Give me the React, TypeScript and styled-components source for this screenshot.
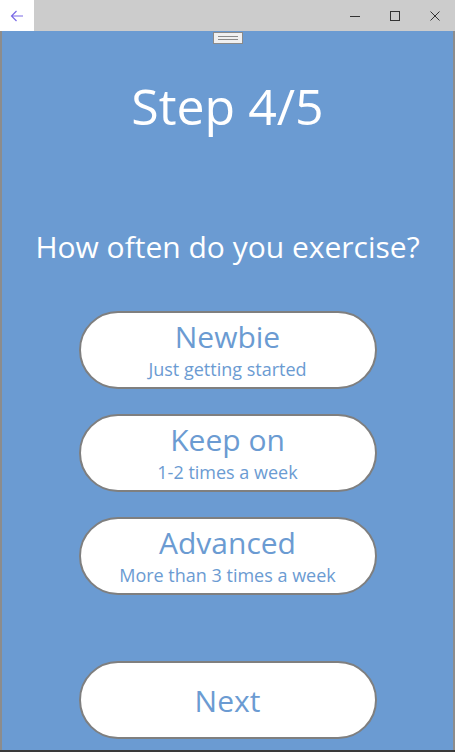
import React from "react";
import styled, { createGlobalStyle } from "styled-components";

const Global = createGlobalStyle`
  html, body { margin: 0; padding: 0; background: #ffffff; }
  body { font-family: "Open Sans", "Noto Sans", sans-serif; }
  * { box-sizing: border-box; }
`;

const Window = styled.div`
  width: 455px;
  height: 752px;
  display: flex;
  flex-direction: column;
  overflow: hidden;
  background: #3a3a3a;
`;

const TitleBar = styled.div`
  height: 31px;
  flex: 0 0 31px;
  display: flex;
  align-items: stretch;
  background: #cccccc;
`;

const BackButton = styled.div`
  width: 34px;
  background: #ffffff;
  display: flex;
  align-items: center;
  justify-content: center;
`;

const Spacer = styled.div`
  flex: 1;
`;

const CaptionButton = styled.div`
  width: 40px;
  display: flex;
  align-items: center;
  justify-content: center;
`;

const Content = styled.div`
  flex: 1;
  display: flex;
  flex-direction: column;
  align-items: center;
  background: #6b9bd2;
  border-left: 2px solid #8c8c8c;
  border-right: 2px solid #8c8c8c;
  margin-bottom: 2px;
`;

const Grip = styled.div`
  width: 30px;
  height: 12px;
  margin-top: 1px;
  background: #f0f0f0;
  border: 1px solid #8a8a8a;
  display: flex;
  flex-direction: column;
  justify-content: center;
  align-items: center;
  gap: 2px;
`;

const GripLine = styled.div`
  width: 20px;
  height: 1px;
  background: #8a8a8a;
`;

const Title = styled.h1`
  margin: 30px 0 0;
  font-weight: 400;
  font-size: 50px;
  line-height: 64px;
  color: #ffffff;
`;

const Question = styled.h2`
  margin: 89px 0 0;
  font-weight: 400;
  font-size: 30px;
  line-height: 40px;
  color: #ffffff;
`;

const Options = styled.div`
  margin-top: 44px;
  display: flex;
  flex-direction: column;
  gap: 25px;
`;

const Pill = styled.div`
  width: 298px;
  height: 78px;
  background: #ffffff;
  border: 2px solid #7f7f7f;
  border-radius: 39px;
  display: flex;
  flex-direction: column;
  align-items: center;
  color: #6b9bd2;
`;

const OptionPill = styled(Pill)`
  justify-content: flex-start;
  padding-top: 6px;
`;

const PillTitle = styled.div`
  font-size: 30px;
  line-height: 36px;
`;

const PillSub = styled.div`
  font-size: 18px;
  line-height: 28px;
`;

const NextPill = styled(Pill)`
  margin-top: 66px;
  justify-content: center;
`;

const NextLabel = styled.div`
  font-size: 30px;
  line-height: 36px;
  margin-top: 2px;
`;

const options = [
  { title: "Newbie", sub: "Just getting started" },
  { title: "Keep on", sub: "1-2 times a week" },
  { title: "Advanced", sub: "More than 3 times a week" },
];

export default function App() {
  return (
    <>
      <Global />
      <Window>
        <TitleBar>
          <BackButton>
            <svg width="14" height="12" viewBox="0 0 14 12">
              <path d="M13 6H1.5M6.5 1L1.5 6l5 5" fill="none" stroke="#7a6ae6" strokeWidth="1.2" />
            </svg>
          </BackButton>
          <Spacer />
          <CaptionButton>
            <svg width="10" height="10" viewBox="0 0 10 10">
              <path d="M0 5.5h10" stroke="#333" strokeWidth="1" />
            </svg>
          </CaptionButton>
          <CaptionButton>
            <svg width="10" height="10" viewBox="0 0 10 10">
              <rect x="0.5" y="0.5" width="9" height="9" fill="none" stroke="#333" strokeWidth="1" />
            </svg>
          </CaptionButton>
          <CaptionButton>
            <svg width="10" height="10" viewBox="0 0 10 10">
              <path d="M0.5 0.5l9 9M9.5 0.5l-9 9" stroke="#333" strokeWidth="1" />
            </svg>
          </CaptionButton>
        </TitleBar>
        <Content>
          <Grip>
            <GripLine />
            <GripLine />
          </Grip>
          <Title>Step 4/5</Title>
          <Question>How often do you exercise?</Question>
          <Options>
            {options.map((o) => (
              <OptionPill key={o.title}>
                <PillTitle>{o.title}</PillTitle>
                <PillSub>{o.sub}</PillSub>
              </OptionPill>
            ))}
          </Options>
          <NextPill>
            <NextLabel>Next</NextLabel>
          </NextPill>
        </Content>
      </Window>
    </>
  );
}
